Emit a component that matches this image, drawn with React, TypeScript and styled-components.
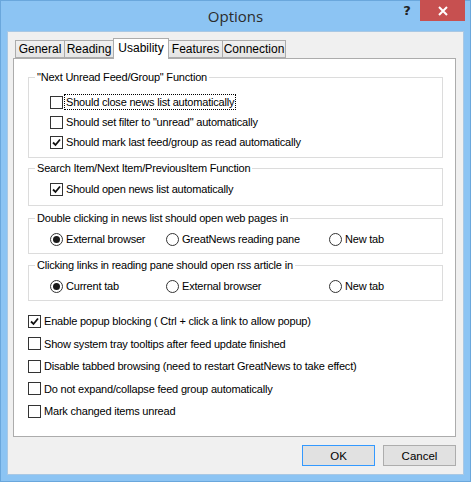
import styled, { createGlobalStyle } from 'styled-components';

const GlobalStyle = createGlobalStyle`
  html, body {
    margin: 0;
    padding: 0;
    background: #8cc4f3;
  }
  * {
    box-sizing: border-box;
  }
`;

const UI_FONT = `'Liberation Sans', Arial, sans-serif`;

const Window = styled.div`
  width: 471px;
  height: 482px;
  background: #8cc4f3;
  border: 1px solid #6aa7dc;
  padding: 0 6px 6px 6px;
  display: flex;
  flex-direction: column;
  font-family: ${UI_FONT};
  font-size: 11px;
  color: #000;
`;

const TitleBar = styled.div`
  height: 30px;
  display: grid;
  grid-template-columns: 1fr auto 1fr;
  align-items: start;
`;

const Title = styled.div`
  grid-column: 2;
  font-family: 'Open Sans', 'Noto Sans', sans-serif;
  font-size: 15px;
  line-height: 30px;
  color: #2b2b2b;
`;

const Captions = styled.div`
  grid-column: 3;
  justify-self: end;
  display: flex;
  align-items: start;
  margin-top: -1px;
  margin-right: -1px;
`;

const HelpButton = styled.div`
  width: 26px;
  height: 20px;
  display: flex;
  align-items: center;
  justify-content: center;
  font-family: 'DejaVu Sans', sans-serif;
  font-weight: bold;
  font-size: 13px;
  color: #222;
`;

const CloseButton = styled.div`
  width: 45px;
  height: 21px;
  background: #c75050;
  display: flex;
  align-items: center;
  justify-content: center;
`;

const Client = styled.div`
  flex: 1;
  background: #f0f0f0;
  border: 1px solid #a9c8e4;
  padding: 6px 7px 8px 5px;
  display: flex;
  flex-direction: column;
`;

const TabStrip = styled.div`
  display: flex;
  align-items: flex-end;
  padding-left: 2px;
  height: 20px;
  position: relative;
  z-index: 1;
`;

const Tab = styled.div<{ $w: number; $active?: boolean }>`
  width: ${(p) => p.$w}px;
  height: ${(p) => (p.$active ? 21 : 18)}px;
  margin-bottom: ${(p) => (p.$active ? -1 : 0)}px;
  margin-right: -1px;
  border: 1px solid #acacac;
  border-bottom: ${(p) => (p.$active ? 'none' : '1px solid #acacac')};
  background: ${(p) => (p.$active ? '#fff' : 'linear-gradient(#f0f0f0, #e5e5e5)')};
  display: flex;
  align-items: center;
  justify-content: center;
  padding-bottom: ${(p) => (p.$active ? 3 : 0)}px;
  font-size: 12px;
  position: relative;
  z-index: ${(p) => (p.$active ? 2 : 1)};
`;

const Panel = styled.div`
  height: 379px;
  background: #fff;
  border: 1px solid #acacac;
  padding: 11px 12px 0 14px;
  display: flex;
  flex-direction: column;
`;

const Group = styled.fieldset<{ $gap: number }>`
  margin: ${(p) => p.$gap}px 0 0 0;
  padding: 0;
  border: 1px solid #dcdcdc;
  min-width: 0;
`;

const Legend = styled.legend`
  margin-left: 6px;
  padding: 0 2px;
  line-height: 14px;
  font-size: 11px;
  letter-spacing: -0.2px;
`;

const GroupBody = styled.div<{ $top: number; $bottom: number }>`
  padding: ${(p) => p.$top}px 0 ${(p) => p.$bottom}px 21px;
`;

const Row = styled.label<{ $h?: number }>`
  height: ${(p) => p.$h ?? 20}px;
  display: flex;
  align-items: center;
  gap: 3px;
  font-size: 11px;
  letter-spacing: -0.2px;
  white-space: nowrap;
`;

const Box = styled.span`
  width: 13px;
  height: 13px;
  border: 1px solid #333;
  background: #fff;
  flex-shrink: 0;
  display: flex;
  align-items: center;
  justify-content: center;
`;

const Radio = styled.span`
  width: 13px;
  height: 13px;
  border: 1px solid #333;
  border-radius: 50%;
  background: #fff;
  flex-shrink: 0;
  display: flex;
  align-items: center;
  justify-content: center;
`;

const Dot = styled.span`
  width: 7px;
  height: 7px;
  border-radius: 50%;
  background: #1a1a1a;
`;

const Caption = styled.span<{ $focus?: boolean }>`
  padding: 1px 1px;
  outline: ${(p) => (p.$focus ? '1px dotted #000' : 'none')};
  margin-left: -1px;
`;

const RadioRow = styled.div`
  display: grid;
  grid-template-columns: 116px 163px auto;
`;

const Options = styled.div`
  margin-top: 9px;
`;

const Footer = styled.div`
  margin-top: 8px;
  display: flex;
  justify-content: flex-end;
  gap: 8px;
`;

const Button = styled.div<{ $default?: boolean }>`
  width: 73px;
  height: 21px;
  border: 1px solid ${(p) => (p.$default ? '#3399ff' : '#adadad')};
  background: #e1e1e1;
  display: flex;
  align-items: center;
  justify-content: center;
  font-size: 11.5px;
`;

function Check({ on }: { on?: boolean }) {
  return (
    <Box>
      {on && (
        <svg width="9" height="9" viewBox="0 0 9 9">
          <path d="M1 4.5 L3.5 7 L8 1.5" fill="none" stroke="#111" strokeWidth="1.8" />
        </svg>
      )}
    </Box>
  );
}

function CheckRow({ on, text, focus, h }: { on?: boolean; text: string; focus?: boolean; h?: number }) {
  return (
    <Row $h={h}>
      <Check on={on} />
      <Caption $focus={focus}>{text}</Caption>
    </Row>
  );
}

function RadioItem({ on, text }: { on?: boolean; text: string }) {
  return (
    <Row>
      <Radio>{on && <Dot />}</Radio>
      <Caption>{text}</Caption>
    </Row>
  );
}

const tabs = [
  { label: 'General', w: 50 },
  { label: 'Reading', w: 50 },
  { label: 'Usability', w: 56, active: true },
  { label: 'Features', w: 55 },
  { label: 'Connection', w: 64 },
];

export default function App() {
  return (
    <>
      <GlobalStyle />
      <Window>
        <TitleBar>
          <Title>Options</Title>
          <Captions>
            <HelpButton>?</HelpButton>
            <CloseButton>
              <svg width="10" height="10" viewBox="0 0 10 10">
                <path d="M1 1 L9 9 M9 1 L1 9" stroke="#fff" strokeWidth="2" />
              </svg>
            </CloseButton>
          </Captions>
        </TitleBar>
        <Client>
          <TabStrip>
            {tabs.map((t) => (
              <Tab key={t.label} $w={t.w} $active={t.active}>
                {t.label}
              </Tab>
            ))}
          </TabStrip>
          <Panel>
            <Group $gap={0}>
              <Legend>"Next Unread Feed/Group" Function</Legend>
              <GroupBody $top={8} $bottom={5}>
                <CheckRow text="Should close news list automatically" focus />
                <CheckRow text={'Should set filter to "unread" automatically'} />
                <CheckRow text="Should mark last feed/group as read automatically" on />
              </GroupBody>
            </Group>
            <Group $gap={3}>
              <Legend>Search Item/Next Item/PreviousItem Function</Legend>
              <GroupBody $top={4} $bottom={6}>
                <CheckRow text="Should open news list automatically" on />
              </GroupBody>
            </Group>
            <Group $gap={5}>
              <Legend>Double clicking in news list should open web pages in</Legend>
              <GroupBody $top={4} $bottom={4}>
                <RadioRow>
                  <RadioItem text="External browser" on />
                  <RadioItem text="GreatNews reading pane" />
                  <RadioItem text="New tab" />
                </RadioRow>
              </GroupBody>
            </Group>
            <Group $gap={4}>
              <Legend>Clicking links in reading pane should open rss article in</Legend>
              <GroupBody $top={4} $bottom={4}>
                <RadioRow>
                  <RadioItem text="Current tab" on />
                  <RadioItem text="External browser" />
                  <RadioItem text="New tab" />
                </RadioRow>
              </GroupBody>
            </Group>
            <Options>
              <CheckRow h={22.5} on text="Enable popup blocking ( Ctrl + click a link to allow popup)" />
              <CheckRow h={22.5} text="Show system tray tooltips after feed update finished" />
              <CheckRow h={22.5} text="Disable tabbed browsing (need to restart GreatNews to take effect)" />
              <CheckRow h={22.5} text="Do not expand/collapse feed group automatically" />
              <CheckRow h={22.5} text="Mark changed items unread" />
            </Options>
          </Panel>
          <Footer>
            <Button $default>OK</Button>
            <Button>Cancel</Button>
          </Footer>
        </Client>
      </Window>
    </>
  );
}
